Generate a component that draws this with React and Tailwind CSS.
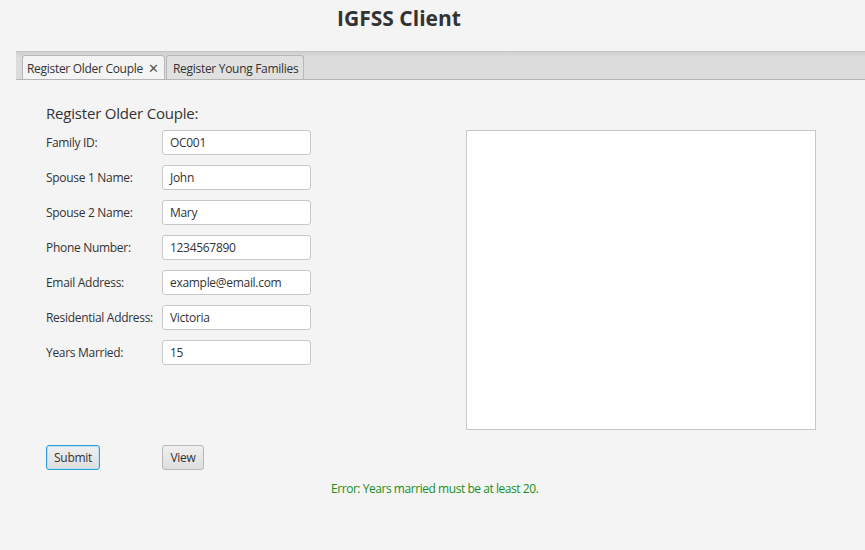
export default function App() {
  const rows = [
    ["Family ID:", "OC001"],
    ["Spouse 1 Name:", "John"],
    ["Spouse 2 Name:", "Mary"],
    ["Phone Number:", "1234567890"],
    ["Email Address:", "example@email.com"],
    ["Residential Address:", "Victoria"],
    ["Years Married:", "15"],
  ];
  return (
    <div className="w-[865px] h-[550px] bg-[#f4f4f4] text-[#333333] overflow-hidden" style={{ fontFamily: "'Open Sans', 'Noto Sans', sans-serif" }}>
      <div className="h-[51px] w-[798px] flex justify-center pt-[4px]">
        <h1 className="text-[21px] font-bold leading-[28px] text-[#333]">IGFSS Client</h1>
      </div>
      <div className="ml-[16px]">
        <div className="h-[29px] border-t border-[#c4c4c4] border-b border-b-[#b5b5b5] bg-gradient-to-b from-[#d0d0d0] to-[#dcdcdc] to-[20%] flex items-end pl-[6px] gap-[1px]">
          <div className="w-[143px] h-[24px] bg-[#f4f4f4] border border-[#b8b8b8] border-b-0 rounded-t-[3px] pl-[4px] pt-[2px] flex items-center text-[12px] tracking-[-0.3px] leading-none">
            <span>Register Older Couple</span>
            <span className="ml-[5px] text-[13px] text-[#555]">✕</span>
          </div>
          <div className="w-[138px] h-[24px] bg-[#e0e0e0] border border-[#b8b8b8] border-b-0 rounded-t-[3px] pl-[6px] pt-[2px] flex items-center text-[12px] tracking-[-0.3px] leading-none">
            Register Young Families
          </div>
        </div>
        <div className="pl-[30px] pt-[22px]">
          <div className="text-[15px] leading-[20px] tracking-[-0.2px] h-[28px] pt-[1px]">Register Older Couple:</div>
          <div className="flex">
            <div className="flex flex-col gap-[10px] w-[265px]">
              {rows.map(([l, v]) => (
                <div key={l} className="flex items-center h-[25px]">
                  <div className="w-[116px] text-[12px] tracking-[-0.3px]">{l}</div>
                  <div className="w-[149px] h-[25px] bg-white border border-[#c8c8c8] rounded-[3px] flex items-center px-[7px] text-[12px] tracking-[-0.3px]">{v}</div>
                </div>
              ))}
            </div>
            <div className="ml-[155px] w-[350px] h-[300px] bg-white border border-[#c8c8c8]" />
          </div>
          <div className="flex mt-[15px] h-[25px]">
            <div className="w-[54px] h-[25px] rounded-[3px] border border-[#2aa0d8] shadow-[inset_0_0_0_1px_#b9e0f4] bg-gradient-to-b from-[#f0f0f0] to-[#dedede] flex items-center justify-center text-[12px] tracking-[-0.3px]">Submit</div>
            <div className="ml-[62px] w-[42px] h-[25px] rounded-[3px] border border-[#b8b8b8] bg-gradient-to-b from-[#f0f0f0] to-[#dedede] flex items-center justify-center text-[12px] tracking-[-0.3px]">View</div>
          </div>
          <div className="mt-[10px] pl-[285px] text-[12px] tracking-[-0.45px] text-[#1a8f1a]">Error: Years married must be at least 20.</div>
        </div>
      </div>
    </div>
  );
}
